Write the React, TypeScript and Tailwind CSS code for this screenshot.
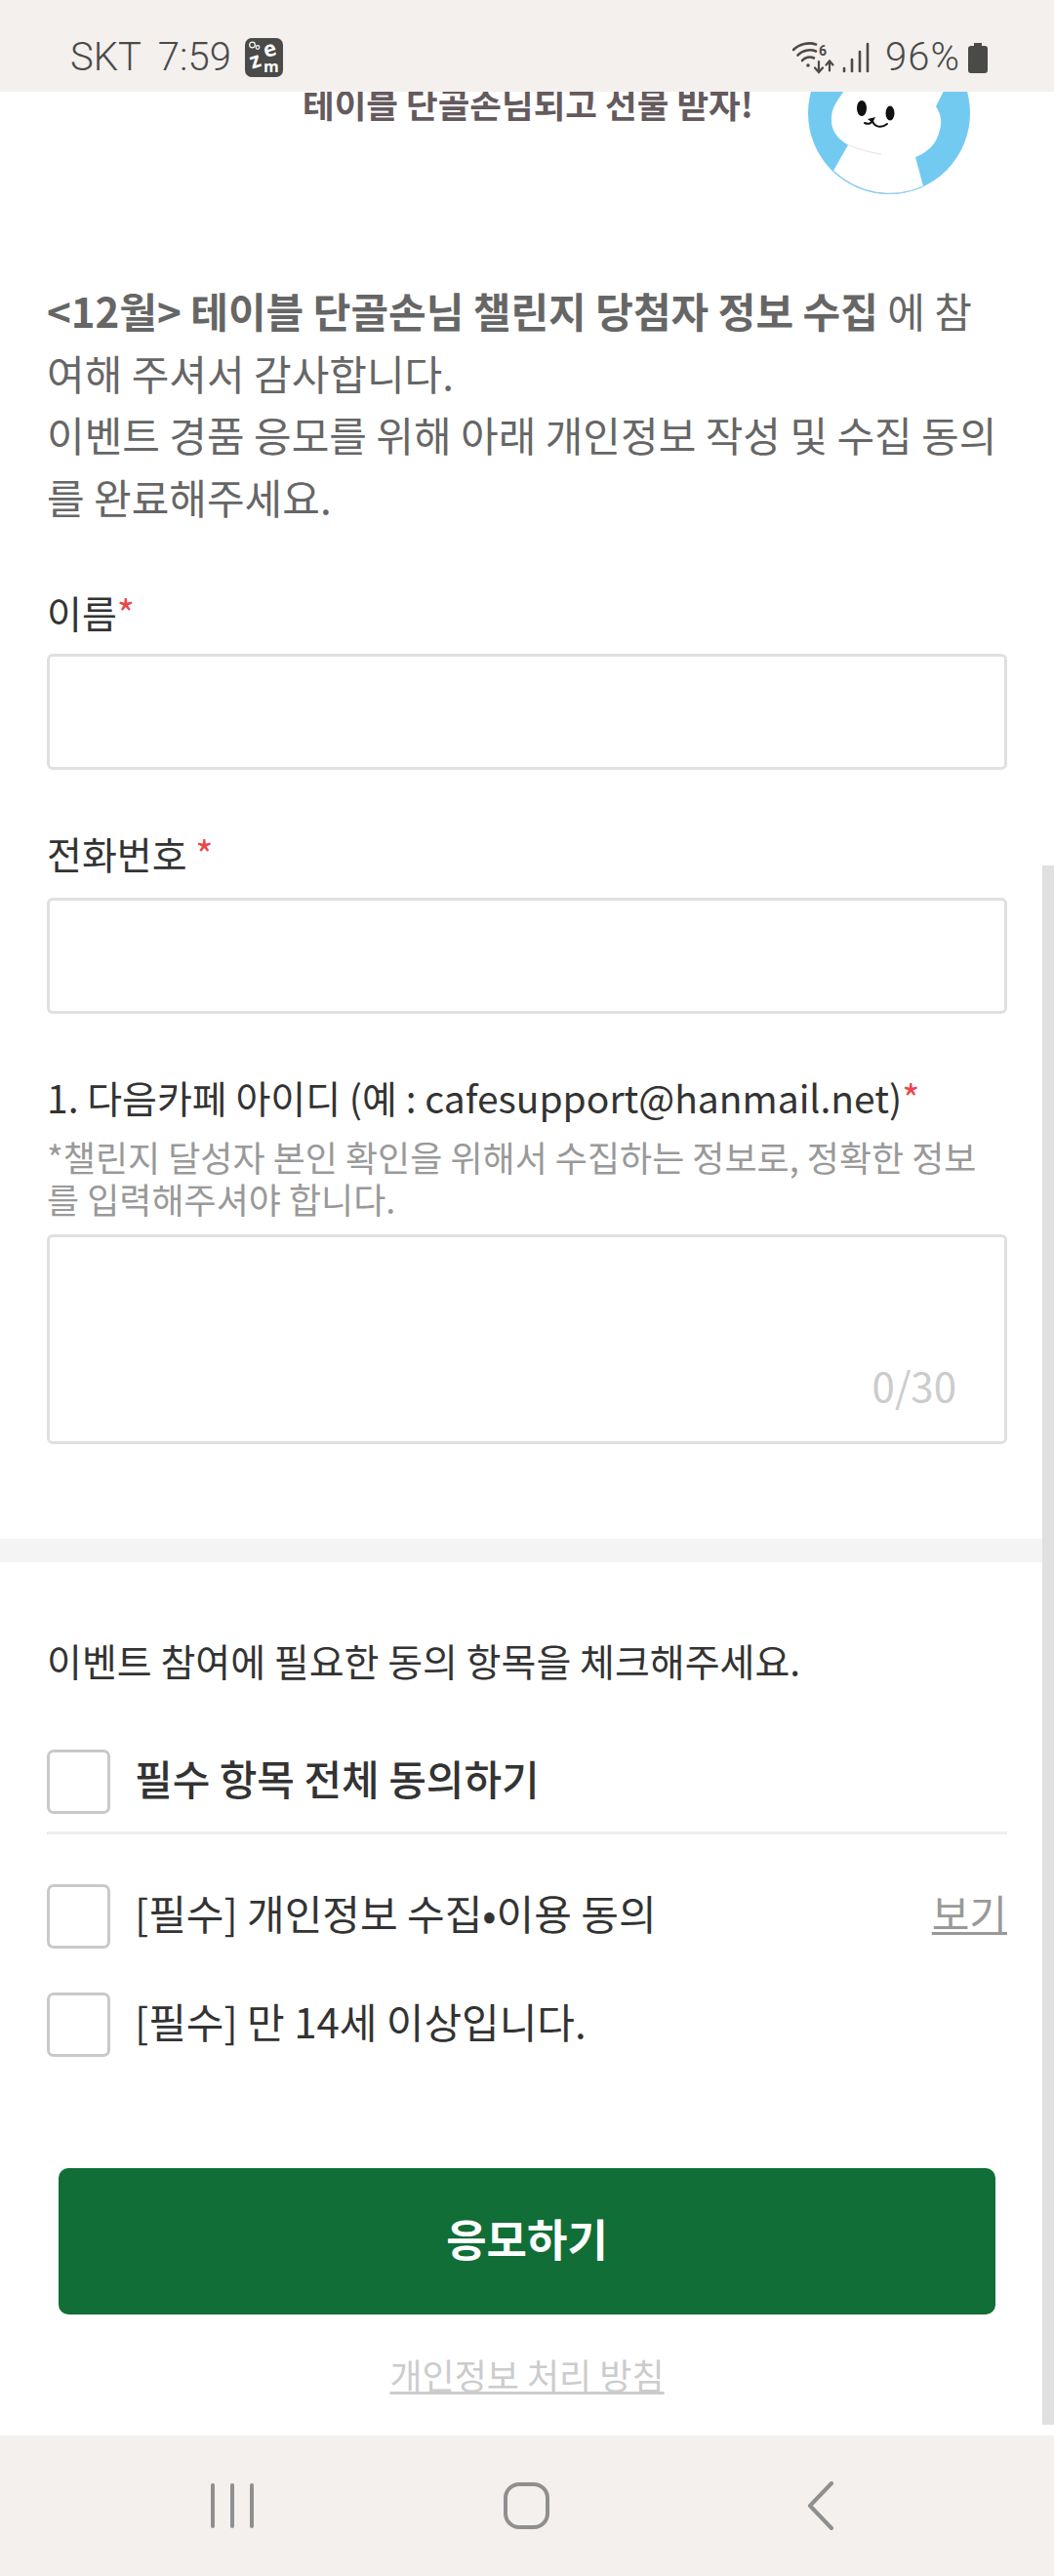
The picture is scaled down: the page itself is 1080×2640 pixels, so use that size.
const FONT = "font-['Noto_Sans_CJK_KR','Noto_Sans',sans-serif]"

function Checkbox() {
  return <span className="block w-[65px] h-[66px] shrink-0 rounded-[7px] border-[3px] border-[#c8c9cc] bg-white" />
}

function ZemIcon() {
  return (
    <svg width="39" height="40" viewBox="0 0 39 40" className="ml-[14px]">
      <rect width="39" height="40" rx="7" fill="#4a4a48" />
      <circle cx="7.5" cy="7" r="2.8" fill="none" stroke="#fff" strokeWidth="1.2" />
      <circle cx="13" cy="9.5" r="1.8" fill="none" stroke="#fff" strokeWidth="1.2" />
      <text x="19" y="19" fontSize="22" fontWeight="700" fill="#fff" fontFamily="Open Sans, sans-serif" transform="rotate(-15 25 12)">e</text>
      <text x="5" y="30" fontSize="22" fontWeight="700" fill="#fff" fontFamily="Open Sans, sans-serif" transform="rotate(-18 12 23)">z</text>
      <text x="19" y="35" fontSize="16" fontWeight="700" fill="#fff" fontFamily="Open Sans, sans-serif">m</text>
    </svg>
  )
}

function StatusIcons() {
  return (
    <svg width="80" height="34" viewBox="0 0 80 34" fill="none" stroke="#4a4a48" strokeLinecap="round">
      {/* wifi 6 with arrows */}
      <path d="M1 9 C7 3 17 1 24 3.5" strokeWidth="2.6" />
      <path d="M5.5 14.5 C10 9.5 18 8 24 10.5" strokeWidth="2.6" />
      <path d="M10 20 C13 16.5 18 15.5 22 17.5" strokeWidth="2.6" />
      <circle cx="16" cy="25" r="1.8" fill="#4a4a48" stroke="none" />
      <text x="27" y="15" fontSize="14" fontWeight="700" fill="#4a4a48" stroke="none" fontFamily="Roboto, sans-serif">6</text>
      <path d="M27 21 V31.5 M23 27.5 L27 32 L31 27.5" strokeWidth="2.2" />
      <path d="M38 30.5 V21 M34.5 24.5 L38 20.5 L41.5 24.5" strokeWidth="2.2" />
      {/* signal */}
      <g strokeWidth="2.6">
        <path d="M53 28 V31" />
        <path d="M61 19 V31" />
        <path d="M69 11 V31" />
        <path d="M77 3 V31" />
      </g>
    </svg>
  )
}

function Avatar() {
  return (
    <svg width="168" height="168" viewBox="0 0 168 168" className="block">
      <circle cx="84" cy="84" r="83" fill="#73caf1" />
      <path d="M27 143 L42 116.5 C30 110 24 100 25 89 C25 78 32 70 38 61 L40 20 L150 20 L140 61 L132 77 C138 86 138 94 136 101 C133 116 122 125 111 129 L119 159 A83 83 0 0 1 27 143 Z" fill="#fff" />
      <path d="M27 143 A83 83 0 0 0 119 159" fill="none" stroke="#8cc8ec" strokeWidth="1" />
      <path d="M42 116.5 C52 121 64 124 76 126" fill="none" stroke="#e4e4e4" strokeWidth="1" />
      <ellipse cx="56" cy="79" rx="5" ry="8" fill="#111" />
      <ellipse cx="85" cy="84" rx="4.5" ry="7.5" fill="#111" />
      <path d="M62 90 L70 88 L67 94 Z" fill="#111" />
      <path d="M59 94 C63 96 66 94 67 92 C69 98 76 100 82 95" fill="none" stroke="#111" strokeWidth="2" strokeLinecap="round" />
    </svg>
  )
}

function Label({ text, gap }: { text: string; gap?: boolean }) {
  return (
    <p className="text-[39px] leading-[56px] text-[#333]">
      {text}
      {gap && ' '}
      <span className="text-[#e8474c]">*</span>
    </p>
  )
}

function Input() {
  return <div className="h-[119px] rounded-[6px] border-[3px] border-[#dfe0e2] bg-white" />
}

export default function App() {
  return (
    <div className={`${FONT} relative w-[1080px] h-[2640px] flex flex-col bg-white overflow-hidden`}>
      {/* status bar */}
      <div className="h-[94px] shrink-0 z-10 bg-[#f3f0ee] flex items-center justify-between pl-[72px] pr-[68px] pt-[24px] text-[#4a4a48]">
        <div className="flex items-center font-['Roboto',sans-serif] font-light text-[40px]">
          <span>SKT</span>
          <span className="ml-[17px]">7:59</span>
          <ZemIcon />
        </div>
        <div className="flex items-center">
          <StatusIcons />
          <span className="ml-[15px] font-['Roboto',sans-serif] font-light text-[40px] tracking-[1px]">96%</span>
          <svg width="20" height="31" viewBox="0 0 20 31" className="ml-[8px]">
            <path d="M6 0 H14 V3 H17 Q20 3 20 6 V28 Q20 31 17 31 H3 Q0 31 0 28 V6 Q0 3 3 3 H6 Z" fill="#4a4a48" />
          </svg>
        </div>
      </div>

      {/* page content */}
      <div className="flex-1 flex flex-col min-h-0 overflow-hidden">
        {/* banner, scrolled past the top */}
        <div className="h-[128px] shrink-0 flex items-start overflow-hidden">
          <p className="ml-[310px] mt-[-13px] w-[472px] text-[35.5px] leading-[50px] font-bold text-[#655a5e] whitespace-nowrap">
            테이블 단골손님되고 선물 받자!
          </p>
          <div className="ml-[45px] mt-[-62px]">
            <Avatar />
          </div>
        </div>

        <div className="px-[48px]">
          <p className="mt-[64px] text-[42px] leading-[63.5px] text-[#666] break-all">
            <b className="font-bold">&lt;12월&gt; 테이블 단골손님 챌린지 당첨자 정보 수집</b> 에 참여해 주셔서 감사합니다.
            <br />
            이벤트 경품 응모를 위해 아래 개인정보 작성 및 수집 동의를 완료해주세요.
          </p>

          <div className="mt-[59px]">
            <Label text="이름" />
          </div>
          <div className="mt-[15px]">
            <Input />
          </div>

          <div className="mt-[57px]">
            <Label text="전화번호" gap />
          </div>
          <div className="mt-[18px]">
            <Input />
          </div>

          <div className="mt-[57px]">
            <Label text="1. 다음카페 아이디 (예 : cafesupport@hanmail.net)" />
          </div>
          <p className="mt-[12px] text-[36px] leading-[43px] text-[#999] break-all">
            *챌린지 달성자 본인 확인을 위해서 수집하는 정보로, 정확한 정보를 입력해주셔야 합니다.
          </p>
          <div className="relative mt-[15px] h-[215px] rounded-[6px] border-[3px] border-[#dfe0e2] bg-white">
            <span className="absolute right-[49px] bottom-[30px] text-[42px] leading-[56px] text-[#ccc]">0/30</span>
          </div>
        </div>

        <div className="mt-[97px] h-[24px] shrink-0 bg-[#f4f4f4]" />

        <div className="px-[48px]">
          <p className="mt-[72px] text-[39px] leading-[56px] text-[#333]">이벤트 참여에 필요한 동의 항목을 체크해주세요.</p>

          <div className="mt-[64px] flex items-center gap-[25px]">
            <Checkbox />
            <span className="pb-[8px] text-[42px] leading-[50px] font-medium text-[#333]">필수 항목 전체 동의하기</span>
          </div>
          <div className="mt-[18px] h-[3px] bg-[#eeeeee]" />

          <div className="mt-[51px] flex items-center gap-[25px]">
            <Checkbox />
            <span className="flex-1 pb-[8px] text-[42px] leading-[50px] text-[#333]">[필수] 개인정보 수집•이용 동의</span>
            <span className="pb-[8px] text-[42px] leading-[50px] text-[#999] underline decoration-[3px]">보기</span>
          </div>
          <div className="mt-[45px] flex items-center gap-[25px]">
            <Checkbox />
            <span className="pb-[8px] text-[42px] leading-[50px] text-[#333]">[필수] 만 14세 이상입니다.</span>
          </div>
        </div>

        <div className="mt-[114px] mx-[60px] h-[150px] shrink-0 rounded-[10px] bg-[#106e36] flex items-center justify-center pb-[6px] text-[45px] font-bold text-white">
          응모하기
        </div>
        <p className="mt-[34px] text-center text-[36px] leading-[54px] text-[#cccccc] underline decoration-[3px]">개인정보 처리 방침</p>
      </div>

      {/* navigation bar */}
      <div className="h-[144px] shrink-0 bg-[#f3f0ee] flex items-center pl-[216px] text-[#8f8f8f]">
        <svg width="44" height="48" viewBox="0 0 44 48" fill="none" stroke="currentColor" strokeWidth="4" strokeLinecap="round">
          <path d="M2 3 V45 M22 3 V45 M42 3 V45" />
        </svg>
        <svg width="47" height="48" viewBox="0 0 47 48" fill="none" stroke="currentColor" strokeWidth="4" className="ml-[256px]">
          <rect x="2" y="2" width="43" height="44" rx="14" />
        </svg>
        <svg width="28" height="50" viewBox="0 0 28 50" fill="none" stroke="currentColor" strokeWidth="4" strokeLinecap="round" strokeLinejoin="round" className="ml-[264px]">
          <path d="M25 2 L3 25 L25 48" />
        </svg>
      </div>

      {/* overlay scrollbar */}
      <div className="absolute right-0 top-[887px] h-[1598px] w-[12px] bg-[#e0e0e0]" />
    </div>
  )
}
